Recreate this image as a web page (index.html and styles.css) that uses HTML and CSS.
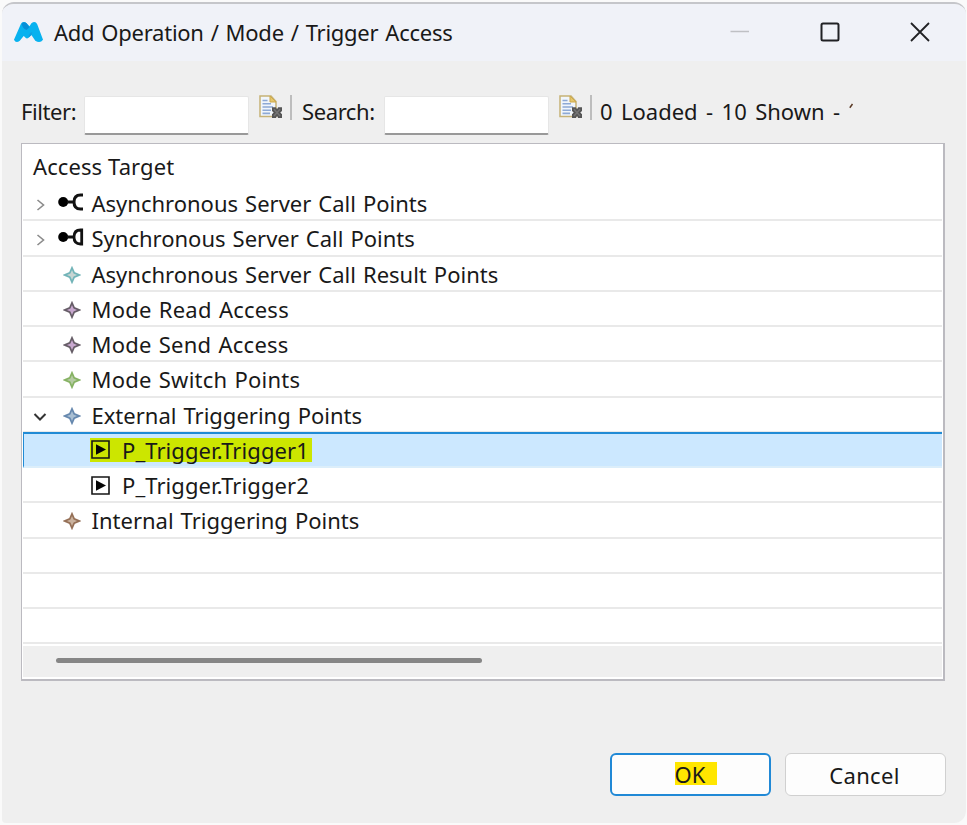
FILE: index.html
```html
<!DOCTYPE html>
<html lang="en">
<head>
<meta charset="utf-8">
<title>Add Operation / Mode / Trigger Access</title>
<link rel="stylesheet" href="styles.css">
</head>
<body>
<svg width="0" height="0" class="defs">
  <symbol id="star" viewBox="0 0 18 18"><path d="M9 1.8 11.2 6.8 16.2 9 11.2 11.2 9 16.2 6.8 11.2 1.8 9 6.8 6.8Z" stroke="currentColor" stroke-width="1.7"/></symbol>
  <symbol id="play" viewBox="0 0 19 19"><path d="M1 1H18V18H1Z" fill="none" stroke="#161616" stroke-width="1.6"/><path d="M5 4.2 15 9.5 5 14.8Z" fill="#050505"/></symbol>
  <symbol id="clear" viewBox="0 0 24 24">
    <path d="M1 1H12L17 6.5V21.5H1Z" fill="#f1f6fb" stroke="#c6b276" stroke-width="1.5"/>
    <path d="M11 1V7H17Z" fill="#e5c66c" stroke="#cda94c"/>
    <path d="M3.5 5.5H8.5M3.5 8.8H12M3.5 12H14M3.5 15.2H12M3.5 18.4H11" stroke="#8da9d5" stroke-width="1.6"/>
    <path d="M13 12.2H16.8L18 14.3 19.2 12.2H23V16L21.3 17.6 23 19.2V23H19.2L18 21 16.8 23H13V19.2L14.7 17.6 13 16Z" fill="#555"/>
    <path d="M15 14.2 21 21M21 14.2 15 21" stroke="#747474" stroke-width="1.5"/>
  </symbol>
  <symbol id="right" viewBox="0 0 10 14"><path d="M1.5 2 7.5 7 1.5 12" fill="none" stroke="#8b8b8b" stroke-width="1.6"/></symbol>
</svg>
<main class="window">
  <header class="titlebar">
    <svg class="logo" viewBox="0 0 32 24"><path d="M1 20 8 4Q10 0 14 3L17 6 19 3Q23 0 25 4L31 20Q28 24 23 21L19 15 16 18Q14 20 12 17L11 16 7 21Q3 24 1 20Z" fill="#08b2ef"/><path d="M9 3Q12 1 14 3L17 7 14 10Q9 8 9 3Z" fill="#078fd8"/><path d="M16 18 19 15 20 12Q16 13 16 18Z" fill="#129ee0"/></svg>
    <h1 class="title">Add Operation / Mode / Trigger Access</h1>
    <div class="controls">
      <svg viewBox="0 0 20 20"><path d="M.5 9.5H19" stroke="#bfc0c4" stroke-width="1.6"/></svg>
      <svg viewBox="0 0 20 20"><rect x="1.5" y="1.5" width="17" height="17" rx="1.5" fill="none" stroke="#202124" stroke-width="2"/></svg>
      <svg viewBox="0 0 20 20"><path d="M1 1 19 19M19 1 1 19" stroke="#202124" stroke-width="1.8"/></svg>
    </div>
  </header>
  <div class="toolbar">
    <label class="label filter" for="filter">Filter:</label><input class="field" id="filter">
    <svg class="clear"><use href="#clear"/></svg><i class="sep"></i>
    <label class="label search" for="search">Search:</label><input class="field" id="search">
    <svg class="clear"><use href="#clear"/></svg><i class="sep last"></i>
    <div class="status">0 Loaded - 10 Shown - <svg class="cut" viewBox="0 0 5 6"><path d="M.8 4.8 3.5 1" stroke="#5a3924" stroke-width="1.5"/></svg></div>
  </div>
  <section class="tree">
    <div class="heading"><span>Access Target</span></div>
    <div class="row"><svg class="arrow"><use href="#right"/></svg><svg class="port" viewBox="0 0 26 18"><circle cx="5.2" cy="9" r="5"/><path d="M9 9H16M25 2H22.5Q16 2 16 9T22.5 16H25" fill="none" stroke="#111" stroke-width="3"/></svg><span>Asynchronous Server Call Points</span></div>
    <div class="row"><svg class="arrow"><use href="#right"/></svg><svg class="port" viewBox="0 0 26 18"><circle cx="5.2" cy="9" r="5"/><path d="M9 9H16M23.7 2H22.5Q16 2 16 9T22.5 16H23.7Z" fill="none" stroke="#111" stroke-width="2.8"/></svg><span>Synchronous Server Call Points</span></div>
    <div class="row"><svg class="star teal"><use href="#star"/></svg><span>Asynchronous Server Call Result Points</span></div>
    <div class="row"><svg class="star purple"><use href="#star"/></svg><span class="loose">Mode Read Access</span></div>
    <div class="row"><svg class="star purple"><use href="#star"/></svg><span class="loose">Mode Send Access</span></div>
    <div class="row"><svg class="star green"><use href="#star"/></svg><span class="loose">Mode Switch Points</span></div>
    <div class="row"><svg class="arrow down" viewBox="0 0 14 10"><path d="M1.5 2 7 7.5 12.5 2" fill="none" stroke="#333" stroke-width="2"/></svg><svg class="star blue"><use href="#star"/></svg><span>External Triggering Points</span></div>
    <div class="row child selected"><div class="mark"><svg class="play"><use href="#play"/></svg><span class="trigger">P_Trigger.Trigger1</span></div></div>
    <div class="row child"><div class="mark"><svg class="play"><use href="#play"/></svg><span class="trigger">P_Trigger.Trigger2</span></div></div>
    <div class="row"><svg class="star brown"><use href="#star"/></svg><span>Internal Triggering Points</span></div>
    <div class="row"></div><div class="row"></div><div class="row"></div>
    <div class="scrollbar"><div class="thumb"></div></div>
  </section>
  <footer class="actions"><button class="btn primary"><span class="ok">OK</span></button><button class="btn"><span class="cancel">Cancel</span></button></footer>
</main>
</body>
</html>
```
FILE: styles.css
```css
* { box-sizing: border-box; }
body { margin: 0; width: 967px; height: 825px; overflow: hidden; padding: 2px 1px 2px 2px; background: #fafafa; color: #191919; font: 22px/30px "Noto Sans", "Open Sans", sans-serif; }
.defs { position: absolute; }
svg { display: block; flex: none; }
span, h1, label, .status { white-space: nowrap; }
.window { height: 821px; background: #efefef; border-top: 2px solid #c5c6ca; border-radius: 12px 12px 12px 4px; overflow: hidden; }
.titlebar { height: 57px; display: flex; align-items: center; padding: 0 36px 2px 11px; background: #f0f2f8; }
.logo { width: 31px; height: 24px; margin-right: 10px; }
.title { margin: 0; font-size: 22px; font-weight: 400; letter-spacing: -.25px; word-spacing: 1.5px; }
.controls { display: flex; gap: 70px; margin-left: auto; }
.controls svg { width: 20px; height: 20px; }
.toolbar { height: 82px; display: flex; align-items: flex-start; padding: 34px 0 0 19px; }
.label { padding-top: 1px; letter-spacing: -.4px; flex: none; }
.filter { width: 63px; }
.search { width: 82px; }
.field { flex: none; width: 165px; height: 39px; margin: 1px 10px 0 0; border: 1px solid #e6e6e6; border-bottom: 2px solid #999; border-radius: 2px; background: #fff; padding: 0; }
.clear { width: 24px; height: 24px; }
.sep { flex: none; width: 2px; height: 25px; margin: 0 10px 0 7px; background: #bdbdbd; }
.sep.last { margin-right: 8px; }
.status { display: flex; width: 254px; padding-top: 1px; overflow: hidden; white-space: pre; word-spacing: 2.7px; }
.cut { width: 5px; height: 6px; margin-top: 7px; }
.tree { width: 924px; height: 538px; margin-left: 19px; border: 2px solid #bbbac0; border-width: 1.5px 2px 2px 1.5px; padding: 1px; background: #fff; display: flex; flex-direction: column; }
.heading { height: 41px; padding: 6px 0 0 10px; flex: none; letter-spacing: .1px; }
.row { height: 35.25px; flex: none; display: flex; align-items: center; position: relative; border-bottom: 2px solid #e9e9e9; padding-left: 68.5px; padding-top: 1px; word-spacing: 1.3px; }
.row > svg { position: absolute; }
.loose { letter-spacing: .22px; }
.trigger { letter-spacing: .08px; }
.arrow { width: 10px; height: 14px; left: 13px; top: 12px; }
.arrow.down { width: 14px; height: 10px; left: 10px; top: 14px; }
.port { width: 26px; height: 18px; left: 35px; top: 7px; }
.star { width: 18px; height: 18px; left: 40px; top: 9px; }
.teal { color: #72b4b8; fill: #c8d5d3; }
.purple { color: #665d67; fill: #c8a8cf; }
.green { color: #86b263; fill: #b6cba4; }
.blue { color: #6688ae; fill: #a9bfd3; }
.brown { color: #957057; fill: #cbb39f; }
.row.child { padding-left: 67px; }
.row.selected { background: #cce8ff; border-top: 2px solid #218bd5; border-left: 1px solid #218bd5; border-bottom-color: #dceefa; padding-left: 66px; padding-top: 0; margin-top: -1px; height: 36.25px; }
.mark { display: flex; align-items: center; height: 24px; width: 222px; padding-left: 1px; }
.selected .mark { background: #cce600; }
.play { width: 19px; height: 19px; margin-right: 12px; }
.scrollbar { height: 31px; margin-top: 2px; padding: 12px 0 0 33px; background: #efefef; }
.thumb { width: 426px; height: 5px; border-radius: 3px; background: #868686; }
.actions { display: flex; justify-content: flex-end; gap: 14px; padding: 72px 20px 0 0; }
.btn { width: 161px; height: 43px; padding: 0; border: 1.5px solid #d0d0d0; border-radius: 6px; background: #fdfdfd; color: #191919; font: inherit; display: flex; align-items: center; justify-content: center; }
.primary { border: 2px solid #2189d6; }
.ok { display: block; width: 42px; height: 23px; line-height: 25px; background: #ffe600; text-align: left; margin: 0 0 2px 10px; }
.cancel { letter-spacing: .3px; margin-right: 2px; }
```
